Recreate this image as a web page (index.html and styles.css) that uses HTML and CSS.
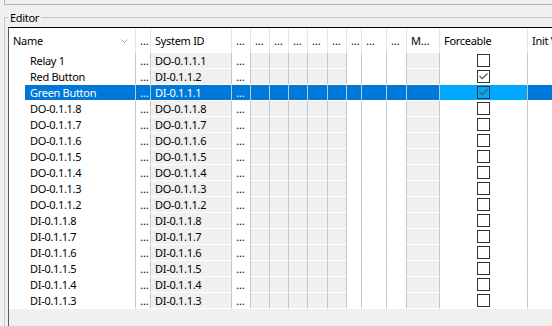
FILE: index.html
```html
<!DOCTYPE html>
<html>
<head>
<meta charset="utf-8">
<link rel="stylesheet" href="styles.css">
</head>
<body>
<div class="toppanel"></div>
<fieldset class="group">
  <legend class="legend">Editor</legend>
  <div class="grid">
    <div class="row head">
      <div class="h hname"><span>Name</span><svg class="chev" width="7" height="4" viewBox="0 0 7 4"><polyline points="0.5,0.5 3.5,3.5 6.5,0.5" fill="none" stroke="#a8a8a8" stroke-width="1"/></svg></div>
      <div class="h">…</div>
      <div class="h">System ID</div>
      <div class="h">…</div>
      <div class="h">…</div>
      <div class="h">…</div>
      <div class="h">…</div>
      <div class="h">…</div>
      <div class="h">…</div>
      <div class="h">…</div>
      <div class="h">…</div>
      <div class="h">…</div>
      <div class="h">M…</div>
      <div class="h">Forceable</div>
      <div class="h">Init Value</div>
    </div>

    <div class="row"><div class="c name"><span class="nm">Relay 1</span></div><div class="c">…</div><div class="c g">DO-0.1.1.1</div><div class="c">…</div><div class="c g"></div><div class="c g"></div><div class="c g"></div><div class="c g"></div><div class="c g"></div><div class="c"></div><div class="c"></div><div class="c"></div><div class="c g"></div><div class="c force"><span class="cb"></span></div><div class="c"></div></div>
    <div class="row"><div class="c name"><span class="nm">Red Button</span></div><div class="c">…</div><div class="c g">DI-0.1.1.2</div><div class="c">…</div><div class="c g"></div><div class="c g"></div><div class="c g"></div><div class="c g"></div><div class="c g"></div><div class="c"></div><div class="c"></div><div class="c"></div><div class="c g"></div><div class="c force"><span class="cb"><svg width="11" height="11" viewBox="0 0 11 11"><polyline points="1.5,5 4.2,7.7 9.5,2.5" fill="none" stroke="#555" stroke-width="1.2"/></svg></span></div><div class="c"></div></div>
    <div class="row sel"><div class="c name"><span class="nm">Green Button</span></div><div class="c">…</div><div class="c g">DI-0.1.1.1</div><div class="c">…</div><div class="c g"></div><div class="c g"></div><div class="c g"></div><div class="c g"></div><div class="c g"></div><div class="c"></div><div class="c"></div><div class="c"></div><div class="c g"></div><div class="c force"><span class="cb"><svg width="11" height="11" viewBox="0 0 11 11"><polyline points="1.5,5 4.2,7.7 9.5,2.5" fill="none" stroke="#555" stroke-width="1.2"/></svg></span></div><div class="c"></div></div>
    <div class="row"><div class="c name"><span class="nm">DO-0.1.1.8</span></div><div class="c">…</div><div class="c g">DO-0.1.1.8</div><div class="c">…</div><div class="c g"></div><div class="c g"></div><div class="c g"></div><div class="c g"></div><div class="c g"></div><div class="c"></div><div class="c"></div><div class="c"></div><div class="c g"></div><div class="c force"><span class="cb"></span></div><div class="c"></div></div>
    <div class="row"><div class="c name"><span class="nm">DO-0.1.1.7</span></div><div class="c">…</div><div class="c g">DO-0.1.1.7</div><div class="c">…</div><div class="c g"></div><div class="c g"></div><div class="c g"></div><div class="c g"></div><div class="c g"></div><div class="c"></div><div class="c"></div><div class="c"></div><div class="c g"></div><div class="c force"><span class="cb"></span></div><div class="c"></div></div>
    <div class="row"><div class="c name"><span class="nm">DO-0.1.1.6</span></div><div class="c">…</div><div class="c g">DO-0.1.1.6</div><div class="c">…</div><div class="c g"></div><div class="c g"></div><div class="c g"></div><div class="c g"></div><div class="c g"></div><div class="c"></div><div class="c"></div><div class="c"></div><div class="c g"></div><div class="c force"><span class="cb"></span></div><div class="c"></div></div>
    <div class="row"><div class="c name"><span class="nm">DO-0.1.1.5</span></div><div class="c">…</div><div class="c g">DO-0.1.1.5</div><div class="c">…</div><div class="c g"></div><div class="c g"></div><div class="c g"></div><div class="c g"></div><div class="c g"></div><div class="c"></div><div class="c"></div><div class="c"></div><div class="c g"></div><div class="c force"><span class="cb"></span></div><div class="c"></div></div>
    <div class="row"><div class="c name"><span class="nm">DO-0.1.1.4</span></div><div class="c">…</div><div class="c g">DO-0.1.1.4</div><div class="c">…</div><div class="c g"></div><div class="c g"></div><div class="c g"></div><div class="c g"></div><div class="c g"></div><div class="c"></div><div class="c"></div><div class="c"></div><div class="c g"></div><div class="c force"><span class="cb"></span></div><div class="c"></div></div>
    <div class="row"><div class="c name"><span class="nm">DO-0.1.1.3</span></div><div class="c">…</div><div class="c g">DO-0.1.1.3</div><div class="c">…</div><div class="c g"></div><div class="c g"></div><div class="c g"></div><div class="c g"></div><div class="c g"></div><div class="c"></div><div class="c"></div><div class="c"></div><div class="c g"></div><div class="c force"><span class="cb"></span></div><div class="c"></div></div>
    <div class="row"><div class="c name"><span class="nm">DO-0.1.1.2</span></div><div class="c">…</div><div class="c g">DO-0.1.1.2</div><div class="c">…</div><div class="c g"></div><div class="c g"></div><div class="c g"></div><div class="c g"></div><div class="c g"></div><div class="c"></div><div class="c"></div><div class="c"></div><div class="c g"></div><div class="c force"><span class="cb"></span></div><div class="c"></div></div>
    <div class="row"><div class="c name"><span class="nm">DI-0.1.1.8</span></div><div class="c">…</div><div class="c g">DI-0.1.1.8</div><div class="c">…</div><div class="c g"></div><div class="c g"></div><div class="c g"></div><div class="c g"></div><div class="c g"></div><div class="c"></div><div class="c"></div><div class="c"></div><div class="c g"></div><div class="c force"><span class="cb"></span></div><div class="c"></div></div>
    <div class="row"><div class="c name"><span class="nm">DI-0.1.1.7</span></div><div class="c">…</div><div class="c g">DI-0.1.1.7</div><div class="c">…</div><div class="c g"></div><div class="c g"></div><div class="c g"></div><div class="c g"></div><div class="c g"></div><div class="c"></div><div class="c"></div><div class="c"></div><div class="c g"></div><div class="c force"><span class="cb"></span></div><div class="c"></div></div>
    <div class="row"><div class="c name"><span class="nm">DI-0.1.1.6</span></div><div class="c">…</div><div class="c g">DI-0.1.1.6</div><div class="c">…</div><div class="c g"></div><div class="c g"></div><div class="c g"></div><div class="c g"></div><div class="c g"></div><div class="c"></div><div class="c"></div><div class="c"></div><div class="c g"></div><div class="c force"><span class="cb"></span></div><div class="c"></div></div>
    <div class="row"><div class="c name"><span class="nm">DI-0.1.1.5</span></div><div class="c">…</div><div class="c g">DI-0.1.1.5</div><div class="c">…</div><div class="c g"></div><div class="c g"></div><div class="c g"></div><div class="c g"></div><div class="c g"></div><div class="c"></div><div class="c"></div><div class="c"></div><div class="c g"></div><div class="c force"><span class="cb"></span></div><div class="c"></div></div>
    <div class="row"><div class="c name"><span class="nm">DI-0.1.1.4</span></div><div class="c">…</div><div class="c g">DI-0.1.1.4</div><div class="c">…</div><div class="c g"></div><div class="c g"></div><div class="c g"></div><div class="c g"></div><div class="c g"></div><div class="c"></div><div class="c"></div><div class="c"></div><div class="c g"></div><div class="c force"><span class="cb"></span></div><div class="c"></div></div>
    <div class="row"><div class="c name"><span class="nm">DI-0.1.1.3</span></div><div class="c">…</div><div class="c g">DI-0.1.1.3</div><div class="c">…</div><div class="c g"></div><div class="c g"></div><div class="c g"></div><div class="c g"></div><div class="c g"></div><div class="c"></div><div class="c"></div><div class="c"></div><div class="c g"></div><div class="c force"><span class="cb"></span></div><div class="c"></div></div>
  </div>
</fieldset>
</body>
</html>
```

FILE: styles.css
```css
html, body {
  margin: 0;
  padding: 0;
  height: 100%;
  overflow: hidden;
  background: #f0f0f0;
  font-family: "Noto Sans", "Open Sans", sans-serif;
  font-size: 11px;
  letter-spacing: -0.3px;
  color: #000;
}

.toppanel {
  height: 4px;
  margin-left: 4px;
  border-left: 1px solid #b4b4b4;
  border-bottom: 1px solid #b4b4b4;
}

.group {
  margin: 6px 0 0 4px;
  padding: 3px 0 0 3px;
  border: none;
  border-top: 1px solid #c8c8c8;
  border-left: 1px solid #c8c8c8;
  min-width: 0;
}

.legend {
  padding: 0 2px;
  line-height: 13px;
  height: 13px;
}

.grid {
  border-top: 1px solid #000;
  border-left: 1px solid #5a5a5a;
  background: #f0f0f0;
  height: 300px;
  overflow: hidden;
}

.row {
  display: grid;
  grid-template-columns: 127px 15px 81px 19px 19px 19px 19px 20px 19px 15px 25px 20px 33px 88px 120px;
  width: max-content;
}

.h {
  box-sizing: border-box;
  height: 25px;
  line-height: 25px;
  padding: 0 4px;
  background: #fff;
  border-right: 1px solid #e5e5e5;
  white-space: nowrap;
  overflow: hidden;
}

.hname {
  display: flex;
  align-items: center;
  justify-content: space-between;
  padding: 0 7px 0 4px;
}

.chev {
  display: block;
  margin-top: 1px;
}

.c {
  box-sizing: border-box;
  height: 16px;
  line-height: 15px;
  padding: 0 4px;
  background: #fff;
  border-right: 1px solid #c6c6c6;
  border-bottom: 1px solid #fff;
  white-space: nowrap;
  overflow: hidden;
}

.c.g {
  background: #f0f0f0;
}

.c.name {
  padding: 0;
}

.nm {
  display: block;
  margin-left: 16px;
  padding-left: 5px;
  height: 15px;
}

.c.force {
  display: flex;
  justify-content: center;
  align-items: flex-start;
  padding: 1px 0 0 0;
}

.cb {
  box-sizing: border-box;
  width: 13px;
  height: 13px;
  border: 1px solid #333;
  background: #fff;
  display: block;
}

.cb svg {
  display: block;
}

.sel .c,
.sel .c.g {
  background: #0078d7;
  color: #fff;
}

.sel .c.name {
  background: #fff;
}

.sel .nm {
  background: #0078d7;
  color: #fff;
}

.sel .c.force {
  background: #00a8ff;
}

.sel .cb {
  background: transparent;
}
```
